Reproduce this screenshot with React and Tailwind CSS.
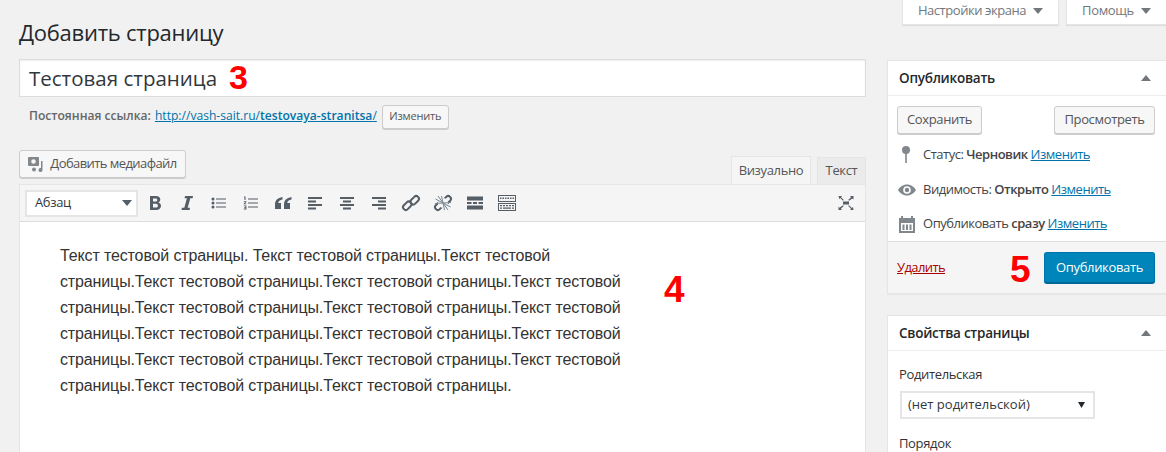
import React from 'react';

const fill = '#555d66';

const Icon = ({ children, w = 20, h = 20, vb = '0 0 20 20', color = fill }) => (
  <svg width={w} height={h} viewBox={vb} fill={color} className="shrink-0">{children}</svg>
);

const linkShape = (
  <g fill="none" stroke={fill} strokeWidth="2">
    <rect x="1.500" y="10" width="9.500" height="5.500" rx="2.700" transform="rotate(-45 6.250 12.750)" />
    <rect x="9" y="4.500" width="9.500" height="5.500" rx="2.700" transform="rotate(-45 13.750 7.250)" />
  </g>
);

const toolbarIcons = [
  <path d="M5 3h6c2.700 0 4.300 1.300 4.300 3.400 0 1.400-.8 2.500-2 3 1.700.4 2.700 1.700 2.700 3.300 0 2.500-1.900 4.300-4.700 4.300H5zm3 2.400v3.200h2.400c1.200 0 1.900-.6 1.900-1.600s-.7-1.600-1.900-1.600zm0 5.400v3.800h2.700c1.400 0 2.200-.7 2.200-1.900s-.8-1.900-2.200-1.900z" fillRule="evenodd" />,
  <path d="M8 3h8l-.4 2.200h-2.300L10.700 14.800h2.300L12.600 17H4.500l.4-2.200h2.400L9.900 5.200H7.600z" />,
  <path d="M4 4.500a1.500 1.500 0 1 1 0 3 1.500 1.500 0 0 1 0-3zm0 4a1.500 1.500 0 1 1 0 3 1.500 1.500 0 0 1 0-3zm0 4a1.500 1.500 0 1 1 0 3 1.500 1.500 0 0 1 0-3zM7 5.500h10v1H7zm0 4h10v1H7zm0 4h10v1H7z" />,
  <path d="M3 3.500h1.500v3.500H3.500V4.500H3zM2.800 8.200h2.600v.8l-1.600 1.400h1.600v.8H2.700v-.8l1.600-1.400H2.800zM2.800 12.500h2.600v3.900H2.800v-.8h1.600v-.8H3.200v-.7h1.200v-.8H2.800zM7 5.500h10v1H7zm0 4h10v1H7zm0 4h10v1H7z" />,
  <path d="M9.500 4C4.500 4.800 2 7.500 2 11.500V16h6v-6H5.200c.2-1.600 1.700-3 4.300-3.500zm9 0c-5 .8-7.500 3.500-7.500 7.500V16h6v-6h-2.800c.2-1.600 1.700-3 4.300-3.500z" />,
  <path d="M3 4h14v2H3zm0 3.500h8v2H3zm0 3.500h14v2H3zm0 3.500h8v2H3z" />,
  <path d="M3 4h14v2H3zm3 3.500h8v2H6zm-3 3.500h14v2H3zm3 3.500h8v2H6z" />,
  <path d="M3 4h14v2H3zm6 3.500h8v2H9zm-6 3.500h14v2H3zm6 3.500h8v2H9z" />,
  linkShape,
  <g>
    {linkShape}
    <circle cx="10" cy="10" r="5" fill="#f5f5f5" />
    <path d="M10 10 5 3M10 10 2.500 6M10 10 2 10.500M10 10l5 7M10 10l7.500 4M10 10l8-.5M10 10 8.500 3M10 10l1.500 7" stroke="#7a8794" strokeWidth="1" fill="none" />
  </g>,
  <path d="M2 3.500h16v4H2zm0 5.500h4.500v2H2zm6 0h4v2H8zm5.500 0H18v2h-4.500zM2 12.500h16v4H2z" />,
  <path d="M1 2h18v7H1zm1 1v5h16V3zM3 4.500h1.500V6H3zm2.500 0H7V6H5.500zm2.500 0h1.500V6H8zm2.500 0H12V6h-1.500zm2.500 0h1.500V6H13zm2.500 0H17V6h-1.500zM1 10h18v8H1zm1 1v6h16v-6zM3 12h2v1.300H3zm3 0h2v1.300H6zm3 0h2v1.300H9zm3 0h2v1.300h-2zm3 0h2v1.300h-2zM3 14.500h2v1.300H3zm3 0h8v1.300H6zm9 0h2v1.300h-2z" fillRule="evenodd" />,
];

const Change = () => <a className="text-[#0073aa] underline">Изменить</a>;

const StatusRow = ({ icon, children }) => (
  <div className="flex items-center h-[34px] pl-[9px] text-[#444] tracking-[-0.48px]">
    <div className="w-[26px] flex justify-start">{icon}</div>
    <div className="whitespace-pre">{children}</div>
  </div>
);

const grayBtn = 'flex items-center justify-center bg-[#f7f7f7] border border-[#ccc] rounded-[3px] shadow-[0_1px_0_#ccc] text-[#555]';

function Arrow({ up, color = '#72777c' }) {
  return (
    <svg width="10" height="6" viewBox="0 0 10 6" fill={color}>
      <path d={up ? 'M5 0l5 6H0z' : 'M0 0h10L5 6z'} />
    </svg>
  );
}

export default function App() {
  return (
    <div className="w-[1166px] h-[452px] overflow-hidden bg-[#f1f1f1] text-[#444] font-['Open_Sans',sans-serif] text-[13px] tracking-[-0.35px]">
      <div className="h-[25px] flex justify-end">
        <div className="w-[157px] h-[25px] mr-[7px] bg-white border border-t-0 border-[#e5e5e5] shadow-[0_1px_1px_rgba(0,0,0,0.08)] flex items-center justify-center gap-[7px] text-[#72777c] tracking-[-0.45px] pb-[2px]">
          Настройки экрана <Arrow />
        </div>
        <div className="w-[100px] h-[25px] bg-white border border-t-0 border-r-0 border-[#e5e5e5] shadow-[0_1px_1px_rgba(0,0,0,0.08)] flex items-center justify-center gap-[7px] text-[#72777c] pb-[2px]">
          Помощь <Arrow />
        </div>
      </div>

      <div className="flex pl-[19px] gap-[21px]">
        <div className="w-[847px] shrink-0">
          <h1 className="h-[34px] text-[22px] leading-[14px] tracking-[-0.25px] text-[#23282d] font-normal">Добавить страницу</h1>

          <div className="h-[38px] bg-white border border-[#ddd] shadow-[inset_0_1px_2px_rgba(0,0,0,0.07)] flex items-center pl-[9px] text-[20.500px] tracking-normal text-[#32373c]">
            Тестовая страница
            <span className="ml-[12px] -mt-[3px] font-['Liberation_Sans',sans-serif] font-bold text-[34px] leading-none text-[#fe0000]">3</span>
          </div>

          <div className="h-[27px] mt-[6px] flex items-center pl-[10px] text-[#666] text-[12.100px] tracking-normal">
            <b className="font-semibold">Постоянная ссылка:</b>
            <a className="ml-[4px] text-[#0073aa] underline">http://vash-sait.ru/<b className="font-semibold">testovaya-stranitsa</b>/</a>
            <div className={`${grayBtn} ml-[5px] w-[67px] h-[24px] text-[11px] tracking-[-0.2px]`}>Изменить</div>
          </div>

          <div className="h-[34px] mt-[20px] flex items-start">
            <div className={`${grayBtn} w-[167px] h-[28px] gap-[4px] pr-[2px] tracking-[-0.57px]`}>
              <svg width="20" height="20" viewBox="0 0 20 20" fill="#82878c">
                <path d="M3 3h9a1 1 0 0 1 1 1v7a1 1 0 0 1-1 1H3a1 1 0 0 1-1-1V4a1 1 0 0 1 1-1zm4.500 2.200a2.300 2.300 0 1 0 0 4.600 2.300 2.300 0 0 0 0-4.600z" fillRule="evenodd" />
                <path d="M15 7h1.500v9a2 2 0 1 1-1.500-1.900zM8 13.500a2 2 0 1 1 0 4 2 2 0 0 1 0-4z" />
              </svg>
              Добавить медиафайл
            </div>
            <div className="ml-auto flex items-end h-[29px] self-end gap-[6px] relative top-[1px]">
              <div className="w-[80px] h-[29px] bg-[#f5f5f5] border border-b-0 border-[#e5e5e5] flex items-center justify-center text-[#555] pb-[1px]">Визуально</div>
              <div className="w-[49px] h-[28px] bg-[#ebebeb] border border-b-0 border-[#e5e5e5] flex items-center justify-center text-[#555] pb-[1px]">Текст</div>
            </div>
          </div>

          <div className="h-[300px] border border-[#e5e5e5] bg-white relative">
            <div className="h-[37px] bg-[#f5f5f5] border-b border-[#ddd] flex items-center pl-[5px] pr-[9px]">
              <div className="w-[113px] h-[27px] bg-white border-2 border-[#e5e5e5] flex items-center justify-between pl-[8px] pr-[4px] text-[#32373c]">
                Абзац <Arrow color="#555d66" />
              </div>
              <div className="flex ml-[1px]">
                {toolbarIcons.map((ic, i) => (
                  <div key={i} className="w-[32px] h-[30px] flex items-center justify-center"><Icon>{ic}</Icon></div>
                ))}
              </div>
              <div className="ml-auto">
                <Icon>
                  <path d="M7 8.500h6v3H7zM2.500 3H6L5 4.200 7.800 7 7 7.800 4.200 5 3.300 6.300zM17.500 3v3.500l-1.200-1L13 7.800 12.200 7l2.900-2.800-1.100-1.200zM2.500 17v-3.500l1 1.200L7 12.200l.8.800-2.900 2.800 1.100 1.200zM17.500 17H14l1.100-1.200-2.900-2.800.8-.8 2.800 2.800 1.200-1.100z" />
                </Icon>
              </div>
            </div>
            <div className="w-[580px] ml-[40px] mt-[21px] font-['Liberation_Sans',sans-serif] text-[16px] leading-[26px] tracking-[-0.13px] text-[#333]">
              Текст тестовой страницы. Текст тестовой страницы.Текст тестовой страницы.Текст тестовой страницы.Текст тестовой страницы.Текст тестовой страницы.Текст тестовой страницы.Текст тестовой страницы.Текст тестовой страницы.Текст тестовой страницы.Текст тестовой страницы.Текст тестовой страницы.Текст тестовой страницы.Текст тестовой страницы.Текст тестовой страницы.Текст тестовой страницы.Текст тестовой страницы.
            </div>
            <span className="absolute left-[644px] top-[86px] font-['Liberation_Sans',sans-serif] font-bold text-[37px] leading-none tracking-normal text-[#fe0000]">4</span>
          </div>
        </div>

        <div className="w-[280px] shrink-0 mt-[35px]">
          <div className="bg-white border border-[#e5e5e5] shadow-[0_1px_1px_rgba(0,0,0,0.04)] h-[234px] flex flex-col relative">
            <div className="h-[35px] border-b border-[#eee] flex items-center justify-between pl-[11px] pr-[15px] text-[13.500px] tracking-[-0.25px] font-semibold text-[#23282d] shrink-0">
              Опубликовать <Arrow up />
            </div>
            <div className="flex justify-between pl-[9px] pr-[11px] pt-[10px]">
              <div className={`${grayBtn} w-[85px] h-[28px]`}>Сохранить</div>
              <div className={`${grayBtn} w-[101px] h-[28px]`}>Просмотреть</div>
            </div>
            <div className="mt-[4px] flex flex-col gap-[0.500px]">
              <StatusRow icon={
                <svg width="20" height="20" viewBox="0 0 20 20" fill="#82878c"><circle cx="9" cy="5" r="4" /><rect x="8.200" y="8" width="1.600" height="10" /></svg>
              }>Статус: <b className="font-semibold">Черновик</b> <Change /></StatusRow>
              <StatusRow icon={
                <svg width="20" height="20" viewBox="0 0 20 20" fill="#82878c"><path d="M10 4.500c4 0 7.500 2.700 9 5.500-1.500 2.800-5 5.500-9 5.500S2.500 12.800 1 10c1.500-2.800 5-5.500 9-5.500zm0 1.700a3.800 3.800 0 1 0 0 7.600 3.800 3.800 0 0 0 0-7.600zm0 1.600a2.200 2.200 0 1 1 0 4.400 2.200 2.200 0 0 1 0-4.400z" fillRule="evenodd" /></svg>
              }>Видимость: <b className="font-semibold">Открыто</b> <Change /></StatusRow>
              <StatusRow icon={
                <svg width="20" height="20" viewBox="0 0 20 20" fill="#82878c"><path d="M2 4h2V2h2v2h8V2h2v2h2v15H2zm2 5v8h12V9zm1.500 1.500h2v5.500h-2zm3.500 0h2v5.500H9zm3.500 0h2v5.500h-2z" fillRule="evenodd" /></svg>
              }>Опубликовать <b className="font-semibold">сразу</b> <Change /></StatusRow>
            </div>
            <div className="mt-auto h-[52px] bg-[#f5f5f5] border-t border-[#ddd] flex items-center justify-between pl-[9px] pr-[11px]">
              <a className="text-[#a00] underline tracking-[-0.6px]">Удалить</a>
              <div className="w-[111px] h-[31px] bg-[#0085ba] border border-[#0073aa] border-b-[#006799] rounded-[3px] shadow-[0_1px_0_#006799] text-white flex items-center justify-center">Опубликовать</div>
            </div>
            <span className="absolute left-[122px] top-[190px] font-['Liberation_Sans',sans-serif] font-bold text-[37px] leading-none tracking-normal text-[#fe0000]">5</span>
          </div>

          <div className="mt-[21px] bg-white border border-[#e5e5e5] h-[150px]">
            <div className="h-[35px] border-b border-[#eee] flex items-center justify-between pl-[11px] pr-[15px] text-[13.500px] tracking-[-0.25px] font-semibold text-[#23282d]">
              Свойства страницы <Arrow up />
            </div>
            <div className="pl-[11px] pt-[14px]">
              <div className="font-medium h-[18px] leading-[18px] text-[#333]">Родительская</div>
              <div className="mt-[8px] w-[195px] h-[28px] ml-[1px] border-2 border-[#e5e5e5] flex items-center justify-between pl-[6px] pr-[8px] text-[13px] tracking-normal text-[#32373c]">
                (нет родительской)
                <svg width="7" height="6" viewBox="0 0 7 6" fill="#23282d"><path d="M0 0h7L3.500 6z" /></svg>
              </div>
              <div className="mt-[15px] font-medium h-[18px] leading-[18px] text-[#333]">Порядок</div>
            </div>
          </div>
        </div>
      </div>
    </div>
  );
}
